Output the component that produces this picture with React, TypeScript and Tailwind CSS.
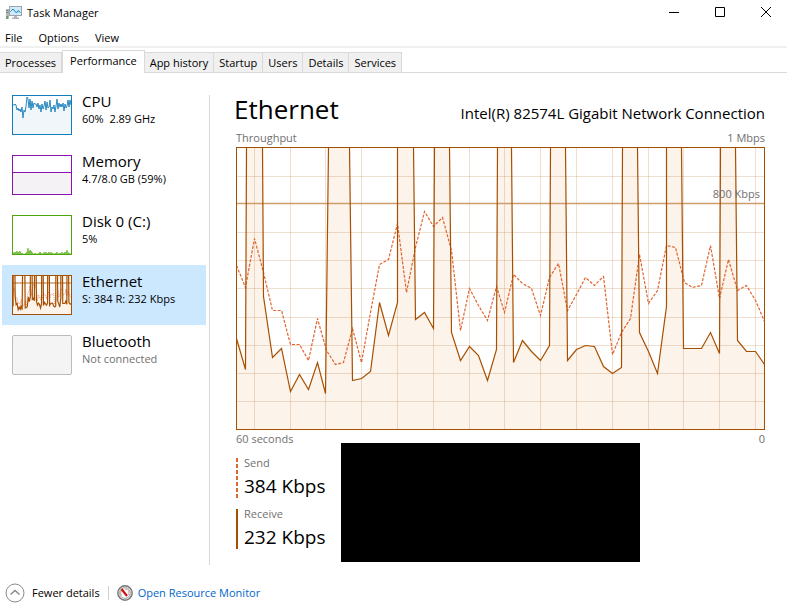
import { useState, type ReactNode } from 'react';
import clsx from 'clsx';

type Point = [number, number];

const CHART_W = 529;
const CHART_H = 283;

// off-scale samples are cut at the top edge (y = 0)
const receive: Point[] = [
  [0, 191], [9, 222], [10, 0], [26, 0], [27, 149], [36, 210], [45, 201], [54, 244], [63, 227], [72, 242],
  [81, 215], [89, 246], [92, 0], [113, 0], [116, 233], [125, 231], [134, 224], [143, 155], [152, 188], [161, 155],
  [161, 0], [177, 0], [179, 172], [188, 165], [197, 181], [198, 0], [213, 0], [215, 185], [224, 213], [233, 199],
  [242, 208], [251, 233], [260, 202], [261, 0], [275, 0], [277, 215], [286, 193], [295, 204], [304, 213], [313, 198],
  [314, 0], [329, 0], [331, 213], [340, 202], [349, 198], [358, 199], [367, 219], [376, 226], [385, 220], [386, 0],
  [401, 0], [403, 185], [412, 204], [421, 226], [430, 159], [430, 0], [445, 0], [447, 201], [465, 201], [474, 185],
  [483, 206], [484, 0], [499, 0], [501, 193], [510, 204], [519, 204], [528, 217],
];

const send: Point[] = [
  [0, 118], [9, 140], [18, 91], [27, 125], [36, 163], [45, 163], [54, 197], [63, 197], [72, 213], [81, 171],
  [90, 203], [99, 217], [107, 215], [116, 181], [125, 215], [134, 165], [143, 117], [152, 112], [161, 76], [170, 145],
  [179, 100], [188, 64], [197, 79], [206, 70], [215, 103], [224, 183], [233, 141], [242, 158], [251, 173], [260, 139],
  [268, 165], [277, 127], [286, 136], [295, 141], [304, 168], [313, 130], [322, 116], [331, 163], [340, 147], [349, 130],
  [358, 138], [367, 129], [376, 207], [385, 185], [394, 171], [403, 107], [412, 156], [421, 143], [430, 98], [439, 100],
  [448, 135], [456, 140], [465, 138], [474, 98], [483, 151], [492, 112], [501, 143], [510, 138], [519, 153], [528, 174],
];

const gridX = [18, 54, 89, 125, 161, 197, 233, 268, 304, 340, 376, 412, 447, 483, 519];
const gridY = [29, 85, 113, 141, 170, 198, 226, 254];

const cpu = [
  10, 10, 9, 10, 15, 13, 16, 14, 17, 12, 23, 15, 17, 11, 2, 4, 13, 4, 15, 6, 13, 8, 9, 9, 12, 8, 14, 10, 17, 9,
  14, 11, 6, 15, 7, 13, 12, 5, 17, 12, 14, 10, 17, 11, 4, 14, 8, 12, 9, 12, 8, 16, 9, 13, 11, 5, 12, 5, 10,
];

const disk = [
  38, 38, 37, 38, 36, 38, 37, 36, 39, 38, 39, 39, 39, 38, 37, 33, 38, 35, 36, 37, 39, 39, 38, 39, 39, 39, 38, 37, 38, 39,
  39, 37, 39, 37, 39, 38, 37, 39, 37, 39, 38, 39, 39, 38, 37, 39, 39, 38, 39, 37, 39, 38, 37, 38, 35, 38, 38, 39, 39,
];

const toPoints = (data: Point[]) => data.map(([x, y]) => `${x + 0.5},${y + 0.5}`).join(' ');
const toSeries = (data: number[]) => data.map((y, i) => `${i + 1},${y}`).join(' ');

function TrafficChart({ thumb = false }: { thumb?: boolean }) {
  return (
    <svg
      viewBox={`0 0 ${CHART_W} ${CHART_H}`}
      preserveAspectRatio="none"
      className={clsx('block w-full bg-white', thumb ? 'h-10' : 'h-[283px]')}
      fill="none"
      aria-hidden="true"
    >
      <polygon points={`0,283 ${toPoints(receive)} 529,283`} fill="#fcf3eb" />
      {!thumb && (
        <g stroke="#a74f01" strokeOpacity="0.18" shapeRendering="crispEdges">
          {gridX.map((x) => <line key={x} x1={x + 0.5} x2={x + 0.5} y1="0" y2={CHART_H} />)}
          {gridY.map((y) => <line key={y} x1="0" x2={CHART_W} y1={y + 0.5} y2={y + 0.5} />)}
        </g>
      )}
      <line x1="0" x2={CHART_W} y1="56.5" y2="56.5" stroke="#cf9d6c" strokeWidth="1.4" vectorEffect="non-scaling-stroke" />
      <polyline
        points={toPoints(send)}
        stroke="#e0642f"
        strokeWidth={thumb ? 1 : 1.2}
        strokeDasharray={thumb ? '1 1' : '3 1.5'}
        strokeOpacity={thumb ? 0.7 : 1}
        vectorEffect="non-scaling-stroke"
      />
      <polyline points={toPoints(receive)} stroke="#a74f01" strokeWidth="1.2" vectorEffect="non-scaling-stroke" />
      <rect
        x="0"
        y="0"
        width={CHART_W}
        height={CHART_H}
        stroke="#a74f01"
        strokeWidth="2"
        vectorEffect="non-scaling-stroke"
      />
    </svg>
  );
}

function CpuThumb() {
  return (
    <svg viewBox="0 0 60 40" className="block h-10 w-full" fill="none" aria-hidden="true">
      <polygon points={`1,40 ${toSeries(cpu)} 59,40`} fill="#f1f6fa" />
      <polyline points={toSeries(cpu)} stroke="#2a8ac0" />
      <rect x="0.5" y="0.5" width="59" height="39" stroke="#117dbb" />
    </svg>
  );
}

function MemoryThumb() {
  return (
    <svg viewBox="0 0 60 40" className="block h-10 w-full" fill="none" aria-hidden="true">
      <rect y="17" width="60" height="23" fill="#f4f2f4" />
      <path d="M0 17.5h60" stroke="#8b12ae" />
      <rect x="0.5" y="0.5" width="59" height="39" stroke="#8b12ae" />
    </svg>
  );
}

function DiskThumb() {
  return (
    <svg viewBox="0 0 60 40" className="block h-10 w-full" fill="none" aria-hidden="true">
      <polygon points={`1,40 ${toSeries(disk)} 59,40`} fill="#4da60c" fillOpacity="0.7" />
      <polyline points={toSeries(disk)} stroke="#4da60c" strokeWidth="0.5" />
      <rect x="0.5" y="0.5" width="59" height="39" stroke="#4da60c" />
    </svg>
  );
}

function AppIcon() {
  return (
    <svg width="16" height="16" viewBox="0 0 16 16" aria-hidden="true">
      <rect x="0" y="4" width="3" height="10" fill="#b4b8b6" />
      <path d="M0 5.5h2.5M0 7.5h2.5" stroke="#7f8a86" />
      <rect x="0" y="11" width="2" height="3" fill="#6f9a78" />
      <rect x="3.5" y="1.5" width="12" height="9" fill="#cdebf8" stroke="#9aa5ab" />
      <path d="M4.500 6.500 7 4l3.500 4L12 5.500l2.500 2" fill="none" stroke="#1b84bd" />
      <path d="M8 11h3v1.500H8zM6 12.500h7V14H6z" fill="#aeb3b5" />
    </svg>
  );
}

function MonitorIcon() {
  return (
    <svg width="16" height="16" viewBox="0 0 16 16" fill="none" aria-hidden="true">
      <circle cx="8" cy="8" r="7.2" fill="#e4e4e4" stroke="#777777" strokeWidth="1.4" />
      <circle cx="8" cy="8" r="5.3" fill="#ffffff" stroke="#a8a8a8" />
      <path d="M4.5 10.5a4 4 0 0 1 0-5M8 4a4 4 0 0 1 3.5 6" stroke="#c98a78" strokeWidth="0.8" />
      <path d="m4.5 4 5.5 7" stroke="#cc1414" strokeWidth="2.2" />
    </svg>
  );
}

interface Resource {
  name: string;
  detail: string;
  thumb: ReactNode;
  disabled?: boolean;
}

const resources: Resource[] = [
  { name: 'CPU', detail: '60%  2.89 GHz', thumb: <CpuThumb /> },
  { name: 'Memory', detail: '4.7/8.0 GB (59%)', thumb: <MemoryThumb /> },
  { name: 'Disk 0 (C:)', detail: '5%', thumb: <DiskThumb /> },
  { name: 'Ethernet', detail: 'S: 384 R: 232 Kbps', thumb: <TrafficChart thumb /> },
  {
    name: 'Bluetooth',
    detail: 'Not connected',
    thumb: <div className="h-10 rounded-xs border border-[#bcbcbc] bg-[#f4f4f4]" />,
    disabled: true,
  },
];

const tabs = ['Processes', 'Performance', 'App history', 'Startup', 'Users', 'Details', 'Services'];

export default function App() {
  const [tab, setTab] = useState('Performance');
  const [selected, setSelected] = useState('Ethernet');

  return (
    <div className="flex min-h-screen flex-col bg-white font-['Segoe_UI','Open_Sans','Noto_Sans',sans-serif] text-[11px] leading-4 text-black">
      <header className="flex h-[26px] items-center pl-1.5">
        <AppIcon />
        <h1 className="ml-[5px] flex-1">Task Manager</h1>
        <div className="flex items-start gap-1.5 self-stretch pr-px">
          <button aria-label="Minimize" className="flex h-6 w-10 items-center justify-center">
            <svg width="10" height="10" viewBox="0 0 10 10" stroke="black"><path d="M0 5.5h10" /></svg>
          </button>
          <button aria-label="Maximize" className="flex h-6 w-10 items-center justify-center">
            <svg width="10" height="10" viewBox="0 0 10 10" fill="none" stroke="black"><path d="M.5.5h9v9h-9z" /></svg>
          </button>
          <button aria-label="Close" className="flex h-6 w-10 items-center justify-center">
            <svg width="10" height="10" viewBox="0 0 10 10" stroke="black"><path d="m0 0 10 10M10 0 0 10" /></svg>
          </button>
        </div>
      </header>

      <nav className="flex h-[22px] items-center gap-4 border-b-2 border-[#f0f0f0] pt-1 pl-[5px]">
        <button>File</button>
        <button>Options</button>
        <button>View</button>
      </nav>

      <div role="tablist" className="flex h-[25px] items-end border-b border-[#d9d9d9]">
        {tabs.map((t) => (
          <button
            key={t}
            role="tab"
            aria-selected={t === tab}
            onClick={() => setTab(t)}
            className={clsx(
              'border-[#d9d9d9] whitespace-nowrap',
              t === tab
                ? '-mb-px h-[23px] border-x border-t bg-white px-[7px] pb-[3px]'
                : 'h-5 border-t border-r bg-[#f0f0f0] px-[5px]',
            )}
          >
            {t}
          </button>
        ))}
      </div>

      <div className="flex flex-1 pt-3">
        <aside className="w-[206px] shrink-0 pl-0.5">
          {resources.map((r) => (
            <button
              key={r.name}
              onClick={() => setSelected(r.name)}
              className={clsx('flex h-[60px] w-full gap-2.5 px-2.5 pt-2.5 text-left', r.name === selected && 'bg-[#cce8ff]')}
            >
              <span className="block w-[60px] shrink-0">{r.thumb}</span>
              <span className="block whitespace-pre">
                <span className="-mt-1 block text-[15px] leading-5">{r.name}</span>
                <span className={clsx('block', r.disabled && 'text-[#707070]')}>{r.detail}</span>
              </span>
            </button>
          ))}
        </aside>

        <main className="mt-2.5 ml-[3px] min-w-0 flex-1 border-l border-[#d9d9d9] pr-[22px] pl-[26px]">
          <div className="flex h-8 items-start justify-between">
            <h2 className="-ml-0.5 text-[26px] leading-7">Ethernet</h2>
            <p className="mt-2 text-[15px] leading-5">Intel(R) 82574L Gigabit Network Connection</p>
          </div>
          <div className="mt-0.5 flex justify-between leading-[18px] text-[#707070]">
            <span>Throughput</span>
            <span>1 Mbps</span>
          </div>
          <div className="relative">
            <TrafficChart />
            <span className="absolute top-[39px] right-[5px] text-[#707070]">800 Kbps</span>
          </div>
          <div className="flex justify-between leading-[18px] text-[#707070]">
            <span>60 seconds</span>
            <span>0</span>
          </div>
          <div className="mt-[-5px] flex items-start">
            <dl className="mt-[15px] w-[105px] shrink-0 space-y-[11px]">
              <div className="flex h-10 gap-1.5">
                <svg width="2" height="40" aria-hidden="true">
                  <path d="M1 0v40" stroke="#e0642f" strokeWidth="2" strokeDasharray="4 2" />
                </svg>
                <div>
                  <dt className="leading-[10px] text-[#707070]">Send</dt>
                  <dd className="mt-1.5 text-[19px] leading-6 whitespace-nowrap">384 Kbps</dd>
                </div>
              </div>
              <div className="flex h-10 gap-1.5">
                <div className="w-0.5 bg-[#a74f01]" />
                <div>
                  <dt className="leading-[10px] text-[#707070]">Receive</dt>
                  <dd className="mt-1.5 text-[19px] leading-6 whitespace-nowrap">232 Kbps</dd>
                </div>
              </div>
            </dl>
            <div className="h-[119px] w-[299px] bg-black" />
          </div>
        </main>
      </div>

      <footer className="flex h-[47px] items-center pt-2 pl-[5px]">
        <button className="flex items-center gap-[7px]">
          <svg width="20" height="20" viewBox="0 0 20 20" fill="none" stroke="#8a8a8a" aria-hidden="true">
            <circle cx="10" cy="10" r="9" />
            <path d="m5.500 11.500 4.500-4 4.500 4" strokeWidth="1.500" />
          </svg>
          Fewer details
        </button>
        <span className="mx-2 h-[14px] w-px bg-[#d0d0d0]" />
        <a href="#resource-monitor" className="flex items-center gap-[5px] text-[#0066cc]">
          <MonitorIcon />
          Open Resource Monitor
        </a>
      </footer>
    </div>
  );
}
